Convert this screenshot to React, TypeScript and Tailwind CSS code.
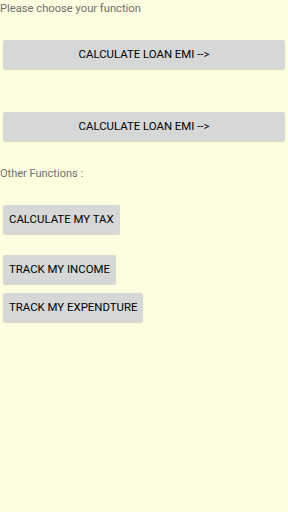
export default function App() {
  const btn =
    "h-[29px] rounded-[2px] bg-[#d6d7d7] px-[6px] text-[11.4px] font-normal text-black shadow-[0_1px_1px_rgba(0,0,0,0.15)]";

  return (
    <div
      className="flex h-[512px] w-[288px] flex-col bg-[#fdfde0]"
      style={{ fontFamily: "Roboto, 'Liberation Sans', sans-serif" }}
    >
      <p className="mt-[2px] h-[14px] text-[11.2px] leading-[14px] text-[#6f6f6f]">
        Please choose your function
      </p>

      <button className={`${btn} mx-[3px] mt-[24px]`}>CALCULATE LOAN EMI --&gt;</button>
      <button className={`${btn} mx-[3px] mt-[43px]`}>CALCULATE LOAN EMI --&gt;</button>

      <p className="mt-[26px] h-[14px] text-[11px] leading-[14px] text-[#6f6f6f]">
        Other Functions :
      </p>

      <div className="ml-[3px] mt-[24px] flex flex-col items-start">
        <button className={btn}>CALCULATE MY TAX</button>
        <button className={`${btn} mt-[21px]`}>TRACK MY INCOME</button>
        <button className={`${btn} mt-[9px]`}>TRACK MY EXPENDTURE</button>
      </div>
    </div>
  );
}
